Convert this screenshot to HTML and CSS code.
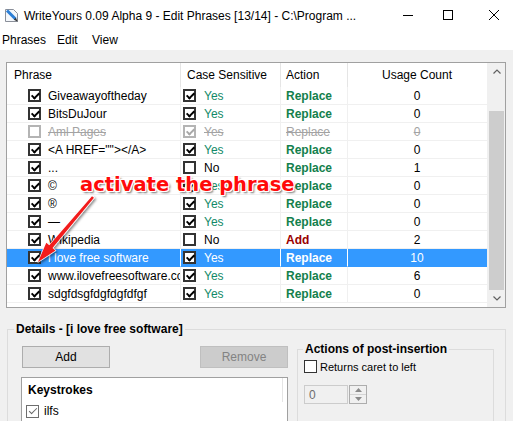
FILE: index.html
```html
<!DOCTYPE html>
<html>
<head>
<meta charset="utf-8">
<link rel="stylesheet" href="styles.css">
</head>
<body>
<div class="titlebar">
  <svg class="app-icon" viewBox="0 0 15 15"><path d="M1.5 1.5h8l4 4v8h-12z" fill="#f4f7fb" stroke="#8a8f99"/><path d="M3 2.5 L11.5 11" stroke="#2d7fd6" stroke-width="3"/><path d="M11.8 9.8 L13.8 13.8 L9.8 11.8z" fill="#333"/></svg>
  <span class="title">WriteYours 0.09 Alpha 9 - Edit Phrases [13/14] - C:\Program ...</span>
  <div class="controls">
    <svg class="ctl min" viewBox="0 0 10 10"><path d="M0 5.5h10" stroke="#000" stroke-width="1"/></svg>
    <svg class="ctl max" viewBox="0 0 10 10"><rect x="0.5" y="0.5" width="9" height="9" fill="none" stroke="#000"/></svg>
    <svg class="ctl close" viewBox="0 0 10 10"><path d="M0 0L10 10M10 0L0 10" stroke="#000" stroke-width="1"/></svg>
  </div>
</div>
<div class="menubar">
  <span class="mi mi-phrases">Phrases</span>
  <span class="mi mi-edit">Edit</span>
  <span class="mi">View</span>
</div>
<div class="client">
  <div class="list">
    <div class="table">
      <div class="grid-head">
        <div class="hcell c-phrase">Phrase</div>
        <div class="hcell c-case">Case Sensitive</div>
        <div class="hcell c-action">Action</div>
        <div class="hcell c-usage">Usage Count</div>
      </div>
      <div class="row">
        <div class="cell c-phrase"><span class="cb on"></span><span class="txt">Giveawayoftheday</span></div>
        <div class="cell c-case"><span class="cb on"></span><span class="yes">Yes</span></div>
        <div class="cell c-action"><span class="rep">Replace</span></div>
        <div class="cell c-usage">0</div>
      </div>
      <div class="row">
        <div class="cell c-phrase"><span class="cb on"></span><span class="txt">BitsDuJour</span></div>
        <div class="cell c-case"><span class="cb on"></span><span class="yes">Yes</span></div>
        <div class="cell c-action"><span class="rep">Replace</span></div>
        <div class="cell c-usage">0</div>
      </div>
      <div class="row dis">
        <div class="cell c-phrase"><span class="cb"></span><span class="txt">Aml Pages</span></div>
        <div class="cell c-case"><span class="cb on"></span><span class="yes">Yes</span></div>
        <div class="cell c-action"><span class="rep">Replace</span></div>
        <div class="cell c-usage"><span class="txt">0</span></div>
      </div>
      <div class="row">
        <div class="cell c-phrase"><span class="cb on"></span><span class="txt">&lt;A HREF=""&gt;&lt;/A&gt;</span></div>
        <div class="cell c-case"><span class="cb on"></span><span class="yes">Yes</span></div>
        <div class="cell c-action"><span class="rep">Replace</span></div>
        <div class="cell c-usage">0</div>
      </div>
      <div class="row">
        <div class="cell c-phrase"><span class="cb on"></span><span class="txt">...</span></div>
        <div class="cell c-case"><span class="cb"></span><span class="no">No</span></div>
        <div class="cell c-action"><span class="rep">Replace</span></div>
        <div class="cell c-usage">1</div>
      </div>
      <div class="row">
        <div class="cell c-phrase"><span class="cb on"></span><span class="txt">©</span></div>
        <div class="cell c-case"><span class="cb on"></span><span class="yes">Yes</span></div>
        <div class="cell c-action"><span class="rep">Replace</span></div>
        <div class="cell c-usage">0</div>
      </div>
      <div class="row">
        <div class="cell c-phrase"><span class="cb on"></span><span class="txt">®</span></div>
        <div class="cell c-case"><span class="cb on"></span><span class="yes">Yes</span></div>
        <div class="cell c-action"><span class="rep">Replace</span></div>
        <div class="cell c-usage">0</div>
      </div>
      <div class="row">
        <div class="cell c-phrase"><span class="cb on"></span><span class="txt">—</span></div>
        <div class="cell c-case"><span class="cb on"></span><span class="yes">Yes</span></div>
        <div class="cell c-action"><span class="rep">Replace</span></div>
        <div class="cell c-usage">0</div>
      </div>
      <div class="row">
        <div class="cell c-phrase"><span class="cb on"></span><span class="txt">Wikipedia</span></div>
        <div class="cell c-case"><span class="cb"></span><span class="no">No</span></div>
        <div class="cell c-action"><span class="add">Add</span></div>
        <div class="cell c-usage">2</div>
      </div>
      <div class="row sel">
        <div class="cell c-phrase"><span class="cb on"></span><span class="txt">i love free software</span></div>
        <div class="cell c-case"><span class="cb on"></span><span class="yes">Yes</span></div>
        <div class="cell c-action"><span class="rep">Replace</span></div>
        <div class="cell c-usage">10</div>
      </div>
      <div class="row">
        <div class="cell c-phrase"><span class="cb on"></span><span class="txt">www.ilovefreesoftware.com</span></div>
        <div class="cell c-case"><span class="cb on"></span><span class="yes">Yes</span></div>
        <div class="cell c-action"><span class="rep">Replace</span></div>
        <div class="cell c-usage">6</div>
      </div>
      <div class="row">
        <div class="cell c-phrase"><span class="cb on"></span><span class="txt">sdgfdsgfdgfdgfdfgf</span></div>
        <div class="cell c-case"><span class="cb on"></span><span class="yes">Yes</span></div>
        <div class="cell c-action"><span class="rep">Replace</span></div>
        <div class="cell c-usage">0</div>
      </div>
    </div>
    <div class="vscroll">
      <div class="sb-btn"><svg width="8" height="5" viewBox="0 0 8 5"><path d="M0.5 4.5L4 1L7.5 4.5" fill="none" stroke="#606060" stroke-width="1.2"/></svg></div>
      <div class="sb-track"><div class="sb-thumb"></div></div>
      <div class="sb-btn"><svg width="8" height="5" viewBox="0 0 8 5"><path d="M0.5 0.5L4 4L7.5 0.5" fill="none" stroke="#606060" stroke-width="1.2"/></svg></div>
    </div>
  </div>

  <fieldset class="details">
    <legend>Details - [i love free software]</legend>
    <div class="details-body">
      <div class="left-col">
        <div class="btn-row">
          <div class="btn">Add</div>
          <div class="btn disabled">Remove</div>
        </div>
        <div class="kbox">
          <div class="khead"><div class="kh-cell">Keystrokes</div><div></div></div>
          <div class="kitem"><span class="dcb on gray"></span><span>ilfs</span></div>
        </div>
      </div>
      <fieldset class="actions">
        <legend>Actions of post-insertion</legend>
        <label class="chk-row"><span class="dcb"></span><span class="chk-label">Returns caret to left</span></label>
        <div class="spinner">
          <div class="spin-input">0</div>
          <div class="spin-btns">
            <div class="spin-b"><svg width="7" height="4" viewBox="0 0 7 4"><path d="M0 4L3.5 0L7 4z" fill="#8a8a8a"/></svg></div>
            <div class="spin-b"><svg width="7" height="4" viewBox="0 0 7 4"><path d="M0 0L3.5 4L7 0z" fill="#8a8a8a"/></svg></div>
          </div>
        </div>
      </fieldset>
    </div>
  </fieldset>
</div>

<svg class="arrow" width="513" height="421" viewBox="0 0 513 421">
  <defs>
    <filter id="sh" x="-20%" y="-20%" width="140%" height="140%">
      <feDropShadow dx="1.5" dy="1.5" stdDeviation="1" flood-color="#000" flood-opacity="0.45"/>
    </filter>
  </defs>
  <g filter="url(#sh)">
    <path d="M94 197.8 L92 196.2 L49.3 245.3 L46.3 242.8 L38 262 L55.5 250.6 L52.5 248.1 Z" fill="#f21b1b" stroke="#fff" stroke-width="1.2" stroke-linejoin="round" paint-order="stroke"/>
  </g>
</svg>
<div class="annot">activate the phrase</div>
</body>
</html>
```
FILE: styles.css
```css
* { box-sizing: border-box; }
html, body { margin: 0; padding: 0; }
body {
  width: 513px;
  height: 421px;
  overflow: hidden;
  position: relative;
  background: #f0f0f0;
  font-family: "Liberation Sans", Arial, sans-serif;
  font-size: 12px;
  color: #000;
}

/* title bar */
.titlebar {
  height: 30px;
  background: #fff;
  display: flex;
  align-items: center;
}
.app-icon { margin-left: 4px; width: 15px; height: 15px; flex: none; }
.title { margin-left: 5px; padding-top: 2px; white-space: nowrap; }
.controls { margin-left: auto; display: flex; align-items: center; }
.ctl { width: 10px; height: 10px; display: block; }
.ctl.min { margin-right: 30px; }
.ctl.max { margin-right: 36px; }
.ctl.close { margin-right: 14px; }

/* menu */
.menubar {
  height: 20px;
  background: #fff;
  display: flex;
  align-items: center;
  padding-left: 2px;
  line-height: 20px;
}
.mi-phrases { width: 55px; }
.mi-edit { width: 35px; }

/* client */
.client { padding: 12px 0 0 6px; }

.list {
  width: 500px;
  height: 246px;
  border: 1px solid #a0a0a0;
  background: #fff;
  display: grid;
  grid-template-columns: 480px 18px;
}
.table { overflow: hidden; }
.grid-head, .row {
  display: grid;
  grid-template-columns: 174px 100px 67px 139px;
}
.grid-head { height: 24px; }
.hcell {
  display: flex;
  align-items: center;
  border-right: 1px solid #e5e5e5;
  white-space: nowrap;
  overflow: hidden;
}
.hcell.c-phrase { padding-left: 7px; }
.hcell.c-case { padding-left: 6px; }
.hcell.c-action { padding-left: 5px; }
.hcell.c-usage { justify-content: center; padding-right: 1px; border-right: none; }

.row { height: 18px; }
.cell {
  display: flex;
  align-items: center;
  border-right: 1px solid #f0f0f0;
  border-bottom: 1px solid #f0f0f0;
  white-space: nowrap;
  overflow: hidden;
}
.cell.c-phrase { padding-left: 21px; gap: 7px; }
.cell.c-case { padding-left: 2px; gap: 8px; }
.cell.c-action { padding-left: 5px; }
.cell.c-usage { justify-content: center; padding-right: 1px; border-right: none; }

.yes { color: #128a68; }
.no { color: #000; }
.rep { color: #13804c; font-weight: bold; }
.add { color: #9a0000; font-weight: bold; }

.cb {
  position: relative;
  flex: none;
  width: 13px;
  height: 13px;
  border: 2px solid #333;
  background: #fff;
}
.cb.on::after {
  content: "";
  position: absolute;
  left: 2.5px;
  top: -0.5px;
  width: 3px;
  height: 6px;
  border: solid #000;
  border-width: 0 2px 2px 0;
  transform: rotate(45deg);
}

.row.dis .cb { border-color: #b4b4b4; }
.row.dis .cb.on::after { border-color: #a8a8a8; }
.row.dis .txt, .row.dis .yes, .row.dis .rep {
  color: #a3a3a3;
  text-decoration: line-through;
  font-weight: normal;
}

.row.sel .cell {
  background: #3399ff;
  color: #fff;
  border-right-color: #fff;
  border-bottom-color: #3399ff;
}
.row.sel .yes, .row.sel .rep { color: #fff; }

/* scrollbar */
.vscroll {
  background: #f0f0f0;
  display: flex;
  flex-direction: column;
}
.sb-btn {
  height: 17px;
  display: flex;
  align-items: center;
  justify-content: center;
  padding-left: 1px;
}
.sb-track { flex: 1; padding: 31px 1px 0 2px; }
.sb-thumb { height: 179px; background: #cdcdcd; }

/* details group */
fieldset { margin: 0; min-width: 0; }
legend {
  padding: 0 2px;
  font-weight: bold;
  line-height: 14px;
  font-size: 12px;
}
.details {
  margin: 14px 0 0 1px;
  width: 499px;
  height: 100px;
  border: 1px solid #dcdcdc;
  padding: 0 0 0 6px;
  overflow: hidden;
}
.details-body {
  display: grid;
  grid-template-columns: 267px 197px;
  column-gap: 9px;
  align-items: start;
  padding: 6px 0 0 7px;
}
.left-col { padding-top: 4px; }
.btn-row {
  display: flex;
  justify-content: space-between;
  padding-left: 1px;
}
.btn {
  width: 88px;
  height: 22px;
  border: 1px solid #adadad;
  background: #e1e1e1;
  display: flex;
  align-items: center;
  justify-content: center;
}
.btn.disabled {
  background: #cccccc;
  border-color: #bfbfbf;
  color: #838383;
}
.kbox {
  margin-top: 9px;
  height: 45px;
  background: #fff;
  border: 1px solid #a0a0a0;
}
.khead {
  height: 24px;
  display: grid;
  grid-template-columns: 261px 1fr;
}
.kh-cell {
  display: flex;
  align-items: center;
  padding-left: 6px;
  font-weight: bold;
  border-right: 1px solid #e5e5e5;
}
.kitem {
  height: 18px;
  display: flex;
  align-items: center;
  gap: 5px;
  padding-left: 4px;
}

.dcb {
  position: relative;
  flex: none;
  width: 13px;
  height: 13px;
  border: 1px solid #333;
  background: #fff;
}
.dcb.gray { border-color: #6e6e6e; }
.dcb.on::after {
  content: "";
  position: absolute;
  left: 3.5px;
  top: 0.5px;
  width: 3px;
  height: 7px;
  border: solid #666;
  border-width: 0 1.5px 1.5px 0;
  transform: rotate(45deg);
}

.actions {
  border: 1px solid #dcdcdc;
  padding: 0 0 0 5px;
  height: 80px;
}
.chk-row {
  margin-top: 4px;
  margin-left: 1px;
  display: flex;
  align-items: center;
  gap: 3px;
  height: 13px;
  font-size: 11px;
}
.spinner {
  margin-top: 12px;
  margin-left: 1px;
  display: flex;
  gap: 1px;
}
.spin-input {
  width: 44px;
  height: 19px;
  border: 1px solid #cccccc;
  background: #f0f0f0;
  color: #6d6d6d;
  display: flex;
  align-items: center;
  padding-left: 4px;
}
.spin-btns {
  width: 18px;
  height: 19px;
  border: 1px solid #adadad;
  display: flex;
  flex-direction: column;
  background: #f0f0f0;
}
.spin-b {
  flex: 1;
  display: flex;
  align-items: center;
  justify-content: center;
}
.spin-b + .spin-b { border-top: 1px solid #d4d4d4; }

/* annotation overlay */
.arrow { position: absolute; left: 0; top: 0; pointer-events: none; }
.annot {
  position: absolute;
  left: 80px;
  top: 174px;
  font-family: "DejaVu Sans", sans-serif;
  font-weight: bold;
  font-size: 19.5px;
  line-height: 21px;
  color: #ff0a0a;
  white-space: nowrap;
  text-shadow:
    1px 0 #fff, -1px 0 #fff, 0 1px #fff, 0 -1px #fff,
    1px 1px #fff, -1px -1px #fff, 1px -1px #fff, -1px 1px #fff,
    2px 2px 2px rgba(0,0,0,0.55);
}
```
